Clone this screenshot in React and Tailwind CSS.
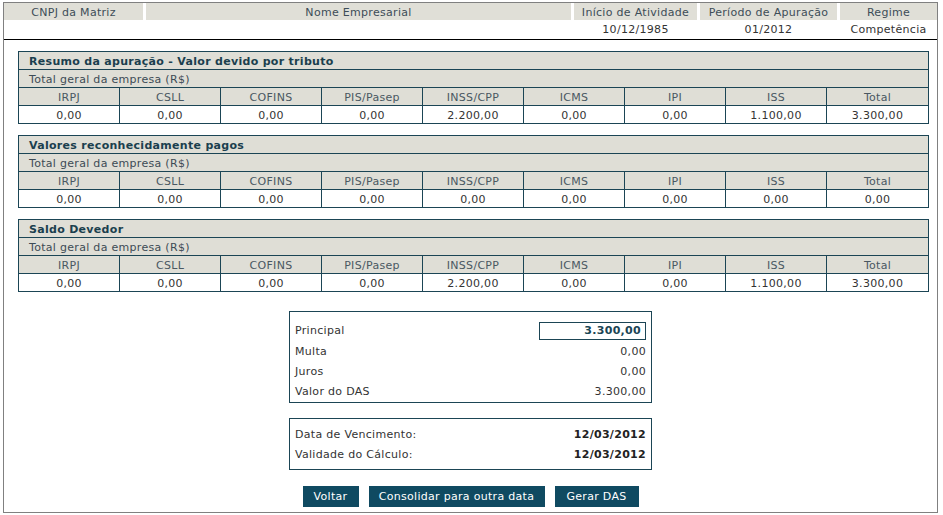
import React from "react";

const tributos = ["IRPJ", "CSLL", "COFINS", "PIS/Pasep", "INSS/CPP", "ICMS", "IPI", "ISS", "Total"];

const secoes = [
  {
    titulo: "Resumo da apuração - Valor devido por tributo",
    valores: ["0,00", "0,00", "0,00", "0,00", "2.200,00", "0,00", "0,00", "1.100,00", "3.300,00"],
  },
  {
    titulo: "Valores reconhecidamente pagos",
    valores: ["0,00", "0,00", "0,00", "0,00", "0,00", "0,00", "0,00", "0,00", "0,00"],
  },
  {
    titulo: "Saldo Devedor",
    valores: ["0,00", "0,00", "0,00", "0,00", "2.200,00", "0,00", "0,00", "1.100,00", "3.300,00"],
  },
];

const topo = [
  { label: "CNPJ da Matriz", valor: "", w: "w-[139px]" },
  { label: "Nome Empresarial", valor: "", w: "w-[425px]" },
  { label: "Início de Atividade", valor: "10/12/1985", w: "w-[123px]" },
  { label: "Período de Apuração", valor: "01/2012", w: "w-[137px]" },
  { label: "Regime", valor: "Competência", w: "flex-1" },
];

const Secao = ({ titulo, valores }) => (
  <div className="w-[911px] border border-[#1b4555]">
    {/* titulo */}
    <div className="h-[18px] bg-[#dfded6] border-b border-[#1b4555] pl-[10px] pt-px flex items-center font-bold text-[#1b3f4e]">
      {titulo}
    </div>
    <div className="h-[18px] bg-[#dfded6] border-b border-[#1b4555] pl-[10px] pt-px flex items-center text-[#3d4b55]">
      Total geral da empresa (R$)
    </div>
    <div className="grid grid-cols-9 bg-[#dfded6] border-b border-[#1b4555]">
      {tributos.map((t, i) => (
        <div
          key={t}
          className={`h-[17px] pt-px flex items-center justify-center text-[#4a5862] ${i < 8 ? "border-r border-[#1b4555]" : ""}`}
        >
          {t}
        </div>
      ))}
    </div>
    <div className="grid grid-cols-9 bg-white">
      {valores.map((v, i) => (
        <div
          key={i}
          className={`h-[17px] pt-px flex items-center justify-center text-[#333] ${i < 8 ? "border-r border-[#1b4555]" : ""}`}
        >
          {v}
        </div>
      ))}
    </div>
  </div>
);

const App = () => {
  return (
    <div className="w-[943px] h-[515px] bg-white pt-[2px] pl-[3px] text-[11px] leading-none tracking-[0.3px] font-['DejaVu_Sans',sans-serif]">
      <div className="w-[935px] h-[511px] border border-[#808080] flex flex-col">

        {/* Cabecalho */}
        <div className="flex gap-[3px]">
          {topo.map((c) => (
            <div key={c.label} className={`${c.w} h-[17px] pt-px bg-[#e0dfd7] flex items-center justify-center text-[#3d4d58]`}>
              {c.label}
            </div>
          ))}
        </div>
        <div className="flex gap-[3px]">
          {topo.map((c) => (
            <div key={c.label} className={`${c.w} h-[17px] pt-px flex items-center justify-center text-[#333]`}>
              {c.valor}
            </div>
          ))}
        </div>
        <div className="mt-[2px] h-px bg-black" />

        {/* Tabelas */}
        <div className="pl-[14px] mt-[11px] flex flex-col gap-[11px]">
          {secoes.map((s) => (
            <Secao key={s.titulo} titulo={s.titulo} valores={s.valores} />
          ))}
        </div>

        {/* Resumo DAS */}
        <div className="self-center mt-[19px] w-[363px] border border-[#1b4555] pt-[8px] pb-px px-[5px] text-[#333]">
          <div className="h-[21px] flex items-center justify-between">
            <span>Principal</span>
            <span className="w-[107px] h-[18px] border border-[#1b4555] flex items-center justify-end pr-[4px] font-bold text-[#1b4555]">
              3.300,00
            </span>
          </div>
          <div className="h-[20px] flex items-center justify-between">
            <span>Multa</span>
            <span>0,00</span>
          </div>
          <div className="h-[20px] flex items-center justify-between">
            <span>Juros</span>
            <span>0,00</span>
          </div>
          <div className="h-[20px] flex items-center justify-between">
            <span>Valor do DAS</span>
            <span>3.300,00</span>
          </div>
        </div>

        <div className="self-center mt-[15px] w-[363px] border border-[#1b4555] pt-[5px] pb-[5px] px-[5px] text-[#333]">
          <div className="h-[20px] flex items-center justify-between">
            <span>Data de Vencimento:</span>
            <span className="font-bold text-[#222]">12/03/2012</span>
          </div>
          <div className="h-[20px] flex items-center justify-between">
            <span>Validade do Cálculo:</span>
            <span className="font-bold text-[#222]">12/03/2012</span>
          </div>
        </div>

        {/* Botoes */}
        <div className="self-center mt-[16px] flex gap-[10px]">
          <button className="w-[56px] h-[21px] bg-[#0f4a61] text-white">Voltar</button>
          <button className="w-[176px] h-[21px] bg-[#0f4a61] text-white">Consolidar para outra data</button>
          <button className="w-[84px] h-[21px] bg-[#0f4a61] text-white">Gerar DAS</button>
        </div>
      </div>
    </div>
  );
};

export default App;
